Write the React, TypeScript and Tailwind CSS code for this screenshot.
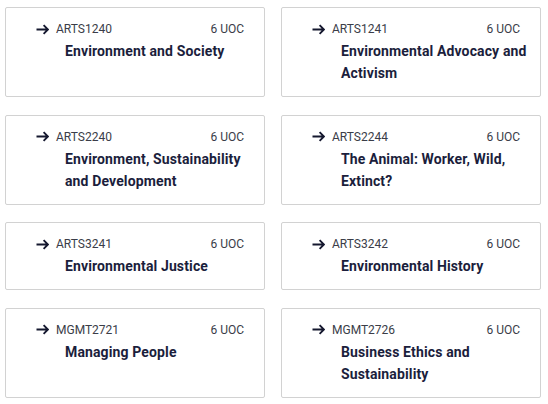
import React from "react";

type Course = { code: string; title: string };

const courses: Course[] = [
  { code: "ARTS1240", title: "Environment and Society" },
  { code: "ARTS1241", title: "Environmental Advocacy and Activism" },
  { code: "ARTS2240", title: "Environment, Sustainability and Development" },
  { code: "ARTS2244", title: "The Animal: Worker, Wild, Extinct?" },
  { code: "ARTS3241", title: "Environmental Justice" },
  { code: "ARTS3242", title: "Environmental History" },
  { code: "MGMT2721", title: "Managing People" },
  { code: "MGMT2726", title: "Business Ethics and Sustainability" },
];

function Arrow() {
  return (
    <svg width="13" height="11" viewBox="0 0 13 11" fill="none" className="shrink-0">
      <path d="M0.5 5.5H12M7.6 1.1L12 5.5L7.6 9.9" stroke="#15182f" strokeWidth="1.9" strokeLinecap="butt" strokeLinejoin="miter" />
    </svg>
  );
}

function Card({ c }: { c: Course }) {
  return (
    <div className="flex flex-col rounded-[2px] border border-[#d2d2d2] bg-white pl-[30px] pr-[10px] pt-[12px] pb-[12px]">
      <div className="flex h-[18px] items-center justify-between pr-[10px]">
        <div className="flex items-center gap-[7px]">
          <Arrow />
          <span className="text-[12px] leading-[18px] text-[#3a3d48]">{c.code}</span>
        </div>
        <span className="text-[12px] leading-[18px] text-[#3a3d48]">6 UOC</span>
      </div>
      <div className="mt-[2px] pl-[29px] text-[14px] font-bold leading-[22px] tracking-[0.13px] text-[#1b1e3c]">
        {c.title}
      </div>
    </div>
  );
}

export default function App() {
  return (
    <div className="min-h-[404px] w-[548px] bg-white pl-[5px] pt-[7px] font-['Roboto',sans-serif]">
      <div className="grid grid-cols-[260px_260px] gap-x-[16px] gap-y-[17.5px]">
        {courses.map((c) => (
          <Card key={c.code} c={c} />
        ))}
      </div>
    </div>
  );
}
